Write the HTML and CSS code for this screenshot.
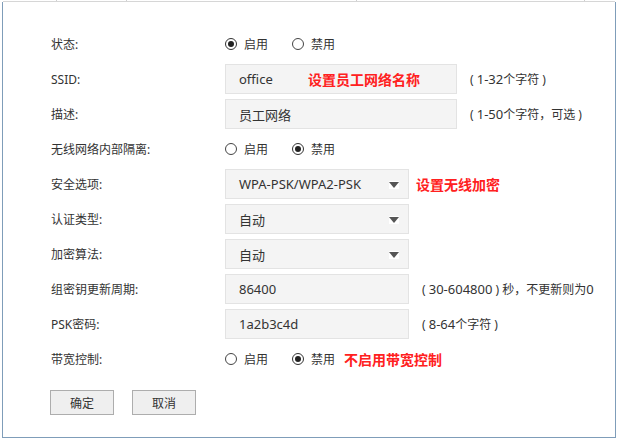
FILE: index.html
```html
<!DOCTYPE html>
<html lang="zh-CN">
<head>
<meta charset="utf-8">
<title>无线网络设置</title>
<link rel="stylesheet" href="styles.css">
</head>
<body>
<div class="tabs"><span class="t1"></span><span class="t2"></span><span class="t3"></span><span class="t4"></span><span class="t5"></span></div>
<div class="frame">
  <div class="form">
    <div class="row">
      <div class="label">状态:</div>
      <div class="ctrl">
        <span class="radio"><svg width="12" height="12" viewBox="0 0 12 12"><circle cx="6" cy="6" r="5.5" fill="#fff" stroke="#333"/><circle cx="6" cy="6" r="3" fill="#222"/></svg>启用</span>
        <span class="radio"><svg width="12" height="12" viewBox="0 0 12 12"><circle cx="6" cy="6" r="5.5" fill="#fff" stroke="#444"/></svg>禁用</span>
      </div>
    </div>
    <div class="row">
      <div class="label">SSID:</div>
      <div class="field">office<span class="note inside">设置员工网络名称</span></div>
      <span class="hint">( <span class="num">1-32</span>个字符 )</span>
    </div>
    <div class="row">
      <div class="label">描述:</div>
      <div class="field">员工网络</div>
      <span class="hint">( <span class="num">1-50</span>个字符，可选 )</span>
    </div>
    <div class="row">
      <div class="label">无线网络内部隔离:</div>
      <div class="ctrl">
        <span class="radio"><svg width="12" height="12" viewBox="0 0 12 12"><circle cx="6" cy="6" r="5.5" fill="#fff" stroke="#444"/></svg>启用</span>
        <span class="radio"><svg width="12" height="12" viewBox="0 0 12 12"><circle cx="6" cy="6" r="5.5" fill="#fff" stroke="#333"/><circle cx="6" cy="6" r="3" fill="#222"/></svg>禁用</span>
      </div>
    </div>
    <div class="row">
      <div class="label">安全选项:</div>
      <div class="field short select">WPA-PSK/WPA2-PSK<span class="arrow"><svg width="10" height="6" viewBox="0 0 10 6"><path d="M0 0H10L5 6Z" fill="#555"/></svg></span></div>
      <span class="note">设置无线加密</span>
    </div>
    <div class="row">
      <div class="label">认证类型:</div>
      <div class="field short select">自动<span class="arrow"><svg width="10" height="6" viewBox="0 0 10 6"><path d="M0 0H10L5 6Z" fill="#555"/></svg></span></div>
    </div>
    <div class="row">
      <div class="label">加密算法:</div>
      <div class="field short select">自动<span class="arrow"><svg width="10" height="6" viewBox="0 0 10 6"><path d="M0 0H10L5 6Z" fill="#555"/></svg></span></div>
    </div>
    <div class="row">
      <div class="label">组密钥更新周期:</div>
      <div class="field short">86400</div>
      <span class="hint">( <span class="num">30-604800</span> ) 秒，不更新则为<span class="num">0</span></span>
    </div>
    <div class="row">
      <div class="label">PSK密码:</div>
      <div class="field short">1a2b3c4d</div>
      <span class="hint">( <span class="num">8-64</span>个字符 )</span>
    </div>
    <div class="row">
      <div class="label">带宽控制:</div>
      <div class="ctrl">
        <span class="radio"><svg width="12" height="12" viewBox="0 0 12 12"><circle cx="6" cy="6" r="5.5" fill="#fff" stroke="#444"/></svg>启用</span>
        <span class="radio last"><svg width="12" height="12" viewBox="0 0 12 12"><circle cx="6" cy="6" r="5.5" fill="#fff" stroke="#333"/><circle cx="6" cy="6" r="3" fill="#222"/></svg>禁用</span>
        <span class="note bw">不启用带宽控制</span>
      </div>
    </div>
    <div class="buttons">
      <button class="btn">确定</button>
      <button class="btn">取消</button>
    </div>
  </div>
</div>
</body>
</html>
```
FILE: styles.css
```css
body {
  margin: 0;
  background: #fff;
  font-family: "Noto Sans", "Noto Sans CJK SC", sans-serif;
  font-size: 12px;
  color: #333;
}
.tabs {
  display: flex;
  height: 1px;
  width: 612px;
  margin-left: 3px;
  border-bottom: 1px solid #d6d6d6;
}
.tabs span {
  height: 1px;
  border-right: 1px solid #cfcfcf;
}
.tabs .t1 { width: 53px; }
.tabs .t2 { width: 69px; }
.tabs .t3 { width: 229px; }
.tabs .t4 { width: 227px; }
.tabs .t5 { flex: 1; border-right: none; }
.frame {
  margin-left: 2px;
  width: 612px;
  height: 435px;
  border: 1px solid #7f9db9;
  border-top: none;
}
.form {
  display: flex;
  flex-direction: column;
  gap: 5px;
  padding: 27px 0 0 48px;
}
.row {
  display: flex;
  align-items: center;
  height: 30px;
}
.label {
  width: 174px;
  flex: none;
}
.ctrl {
  display: flex;
  align-items: center;
}
.radio {
  display: inline-flex;
  align-items: center;
  gap: 7px;
  margin-right: 24px;
}
.radio.last { margin-right: 0; }
.field {
  box-sizing: border-box;
  position: relative;
  display: flex;
  align-items: center;
  width: 232px;
  height: 30px;
  padding: 0 13px;
  background: #f4f4f4;
  border: 1px solid #e3e3e3;
  font-size: 13px;
}
.field.short { width: 184px; }
.select .arrow {
  margin-left: auto;
  display: flex;
  align-items: center;
  justify-content: center;
  width: 10px;
  height: 8px;
  background: #fff;
  margin-right: -4px;
  margin-top: 2px;
}
.select .arrow svg { display: block; }
.hint {
  margin-left: 13px;
  white-space: nowrap;
}
.hint .num { font-size: 13px; }
.note {
  color: #ff2020;
  font-size: 14px;
  font-weight: bold;
  margin-left: 7px;
  white-space: nowrap;
}
.note.inside {
  position: absolute;
  left: 82px;
  margin: 0;
}
.note.bw { margin-left: 9px; }
.buttons {
  display: flex;
  gap: 18px;
  margin: 11px 0 0 -1px;
}
.btn {
  box-sizing: border-box;
  width: 64px;
  height: 25px;
  border: 1px solid #adadad;
  background: #efefef;
  font-family: inherit;
  font-size: 12px;
  color: #333;
  padding: 0;
}
```
